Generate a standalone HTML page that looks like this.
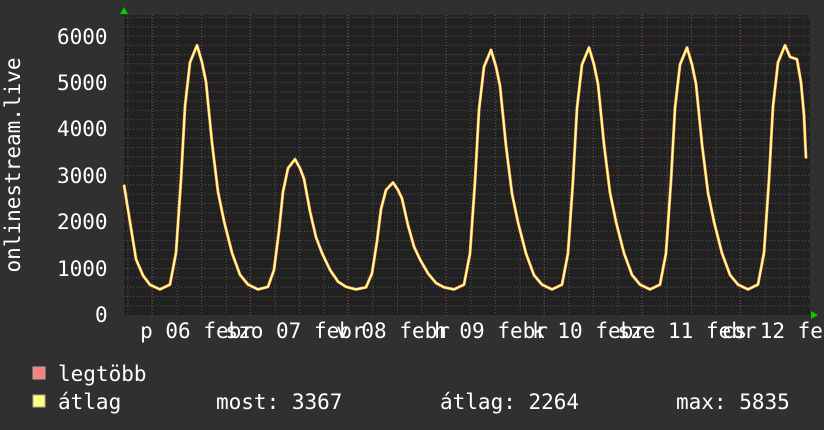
<!DOCTYPE html>
<html><head><meta charset="utf-8"><style>
body{margin:0;width:824px;height:430px;background:#303030;overflow:hidden;position:relative;font-family:"DejaVu Sans Mono","Liberation Mono",monospace;color:#fff}
.t{position:absolute;font-size:21px;white-space:pre;line-height:1}
</style></head><body>
<svg width="824" height="430" style="position:absolute;left:0;top:0" id="s">
<rect x="124" y="15" width="686" height="300" fill="#212121"/>
<g id="g"></g>
<path id="pk" fill="none" stroke="#ff7f7f" stroke-width="3" stroke-linejoin="round"/>
<path id="ye" fill="none" stroke="#ffff80" stroke-width="2" stroke-linejoin="round"/>
<polygon points="120,14 124,7 128,14" fill="#00cc00"/>
<polygon points="811,311 818,315 811,319" fill="#00cc00"/>
<rect x="33" y="367" width="12" height="12" fill="#ff7f7f" stroke="#aaa" stroke-width="1"/>
<rect x="33" y="395" width="12" height="12" fill="#ffff7f" stroke="#aaa" stroke-width="1"/>
<text x="0" y="0" transform="translate(20,165) rotate(-90)" text-anchor="middle" font-family="DejaVu Sans Mono,monospace" font-size="21" fill="#fff">onlinestream.live</text>
</svg>
<div class="t" style="left:57px;top:27px">6000</div>
<div class="t" style="left:57px;top:73px">5000</div>
<div class="t" style="left:57px;top:119px">4000</div>
<div class="t" style="left:57px;top:166px">3000</div>
<div class="t" style="left:57px;top:212px">2000</div>
<div class="t" style="left:57px;top:259px">1000</div>
<div class="t" style="left:95px;top:305px">0</div>
<div id="xl"></div>
<div class="t" style="left:58px;top:364px">legtöbb</div>
<div class="t" style="left:58px;top:392px">átlag</div>
<div class="t" style="left:216px;top:392px">most: 3367</div>
<div class="t" style="left:440px;top:392px">átlag: 2264</div>
<div class="t" style="left:676px;top:392px">max: 5835</div>
<script>
var g=document.getElementById('g'),h='';
for(var x=128;x<810;x+=24.5){h+='<line x1="'+x+'" y1="15" x2="'+x+'" y2="315" stroke="#555" stroke-dasharray="1,2"/>';}
for(var v=200;v<=6400;v+=200){var y=315-0.0465*v;if(y<15)break;h+='<line x1="124" y1="'+y+'" x2="810" y2="'+y+'" stroke="'+(v%1000?'#555':'#7a3f3f')+'" stroke-dasharray="1,2"/>';}
for(var k=0;k<7;k++){var x=152+98*k;h+='<line x1="'+x+'" y1="15" x2="'+x+'" y2="318" stroke="#7a3f3f" stroke-dasharray="1,2"/>';}
g.innerHTML=h;
var tf=[[0,0],[10,.02],[16,.15],[21,.45],[25,.75],[30,.93],[37,1],[42,.93],[46,.85],[52,.6],[58,.4],[64,.28],[72,.15],[80,.06],[88,.02]];
var P=[5800,3350,2850,5700,5750,5750,5800];
var B=550;
var pts=[[124,2800],[130,2000],[136,1200],[143,850],[150,650],[160,B]];
for(var k=0;k<7;k++){var t0=160+98*k;tf.forEach(function(p){var x=t0+p[0];if(k==0&&p[0]==0)return;if(k==6&&p[0]>37)return;pts.push([x,B+p[1]*(P[k]-B)]);});}
pts.push([790,5550],[797,5500],[801,5000],[804,4300],[806,3367]);
var d=pts.map(function(p,i){return(i?'L':'M')+p[0]+','+(315-0.0465*p[1]).toFixed(1)}).join('');
document.getElementById('pk').setAttribute('d',d);
document.getElementById('ye').setAttribute('d',d);
var L=['p 06 febr','szo 07 febr','v 08 febr','h 09 febr','k 10 febr','sze 11 febr','cs 12 febr'],s='';
L.forEach(function(t,k){var c=197+98*k;s+='<div class="t" style="left:'+(c-t.length*6.32)+'px;top:321px">'+t+'</div>';});
document.getElementById('xl').innerHTML=s;
</script>
</body></html>
